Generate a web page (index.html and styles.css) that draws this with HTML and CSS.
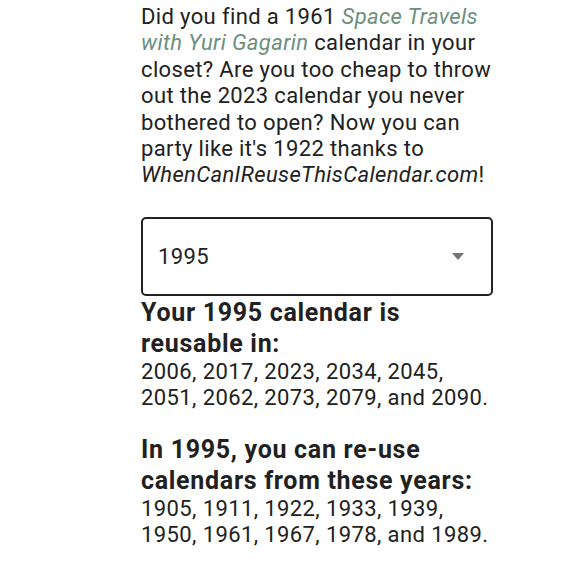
FILE: index.html
```html
<!DOCTYPE html>
<html lang="en">
<head>
<meta charset="utf-8">
<link rel="stylesheet" href="styles.css">
</head>
<body>
<main class="page">
  <p class="intro">Did you find a 1961 <a class="link" href="#">Space Travels with Yuri Gagarin</a> calendar in your closet? Are you too cheap to throw out the 2023 calendar you never bothered to open? Now you can party like it's 1922 thanks to <em>WhenCanIReuseThisCalendar.com</em>!</p>
  <div class="select">
    <span class="select-value">1995</span>
    <span class="select-arrow"></span>
  </div>
  <section class="result">
    <h2 class="result-title">Your 1995 calendar is reusable in:</h2>
    <p class="result-list">2006, 2017, 2023, 2034, 2045, 2051, 2062, 2073, 2079, and 2090.</p>
  </section>
  <section class="result second">
    <h2 class="result-title">In 1995, you can re-use calendars from these years:</h2>
    <p class="result-list">1905, 1911, 1922, 1933, 1939, 1950, 1961, 1967, 1978, and 1989.</p>
  </section>
</main>
</body>
</html>
```
FILE: styles.css
```css
html, body {
  margin: 0;
  padding: 0;
  background: #ffffff;
}
body {
  font-family: Roboto, "Noto Sans", sans-serif;
  color: #212121;
}
.page {
  width: 352px;
  margin-left: 141px;
  padding-top: 4px;
}
.intro {
  margin: 0;
  font-size: 22px;
  line-height: 26.4px;
  letter-spacing: 0.36px;
}
.link {
  color: #6b8f80;
  font-style: italic;
  text-decoration: none;
}
.intro em {
  font-style: italic;
}
.select {
  margin-top: 28px;
  height: 75px;
  border: 2px solid #212121;
  border-radius: 5px;
  box-sizing: content-box;
  display: flex;
  align-items: center;
  justify-content: space-between;
  padding: 0 27px 0 15px;
  width: calc(352px - 2px * 2 - 27px - 15px);
}
.select-value {
  font-size: 22px;
  letter-spacing: 0.36px;
}
.select-arrow {
  width: 0;
  height: 0;
  border-left: 6px solid transparent;
  border-right: 6px solid transparent;
  border-top: 7px solid #757575;
}
.result-title {
  margin: 0;
  font-size: 25px;
  font-weight: 700;
  line-height: 31px;
  letter-spacing: 0.7px;
}
.result {
  margin-top: 1px;
}
.result.second {
  margin-top: 22px;
}
.result-list {
  margin: 0;
  font-size: 22px;
  line-height: 26.4px;
  letter-spacing: 0.4px;
}
```
